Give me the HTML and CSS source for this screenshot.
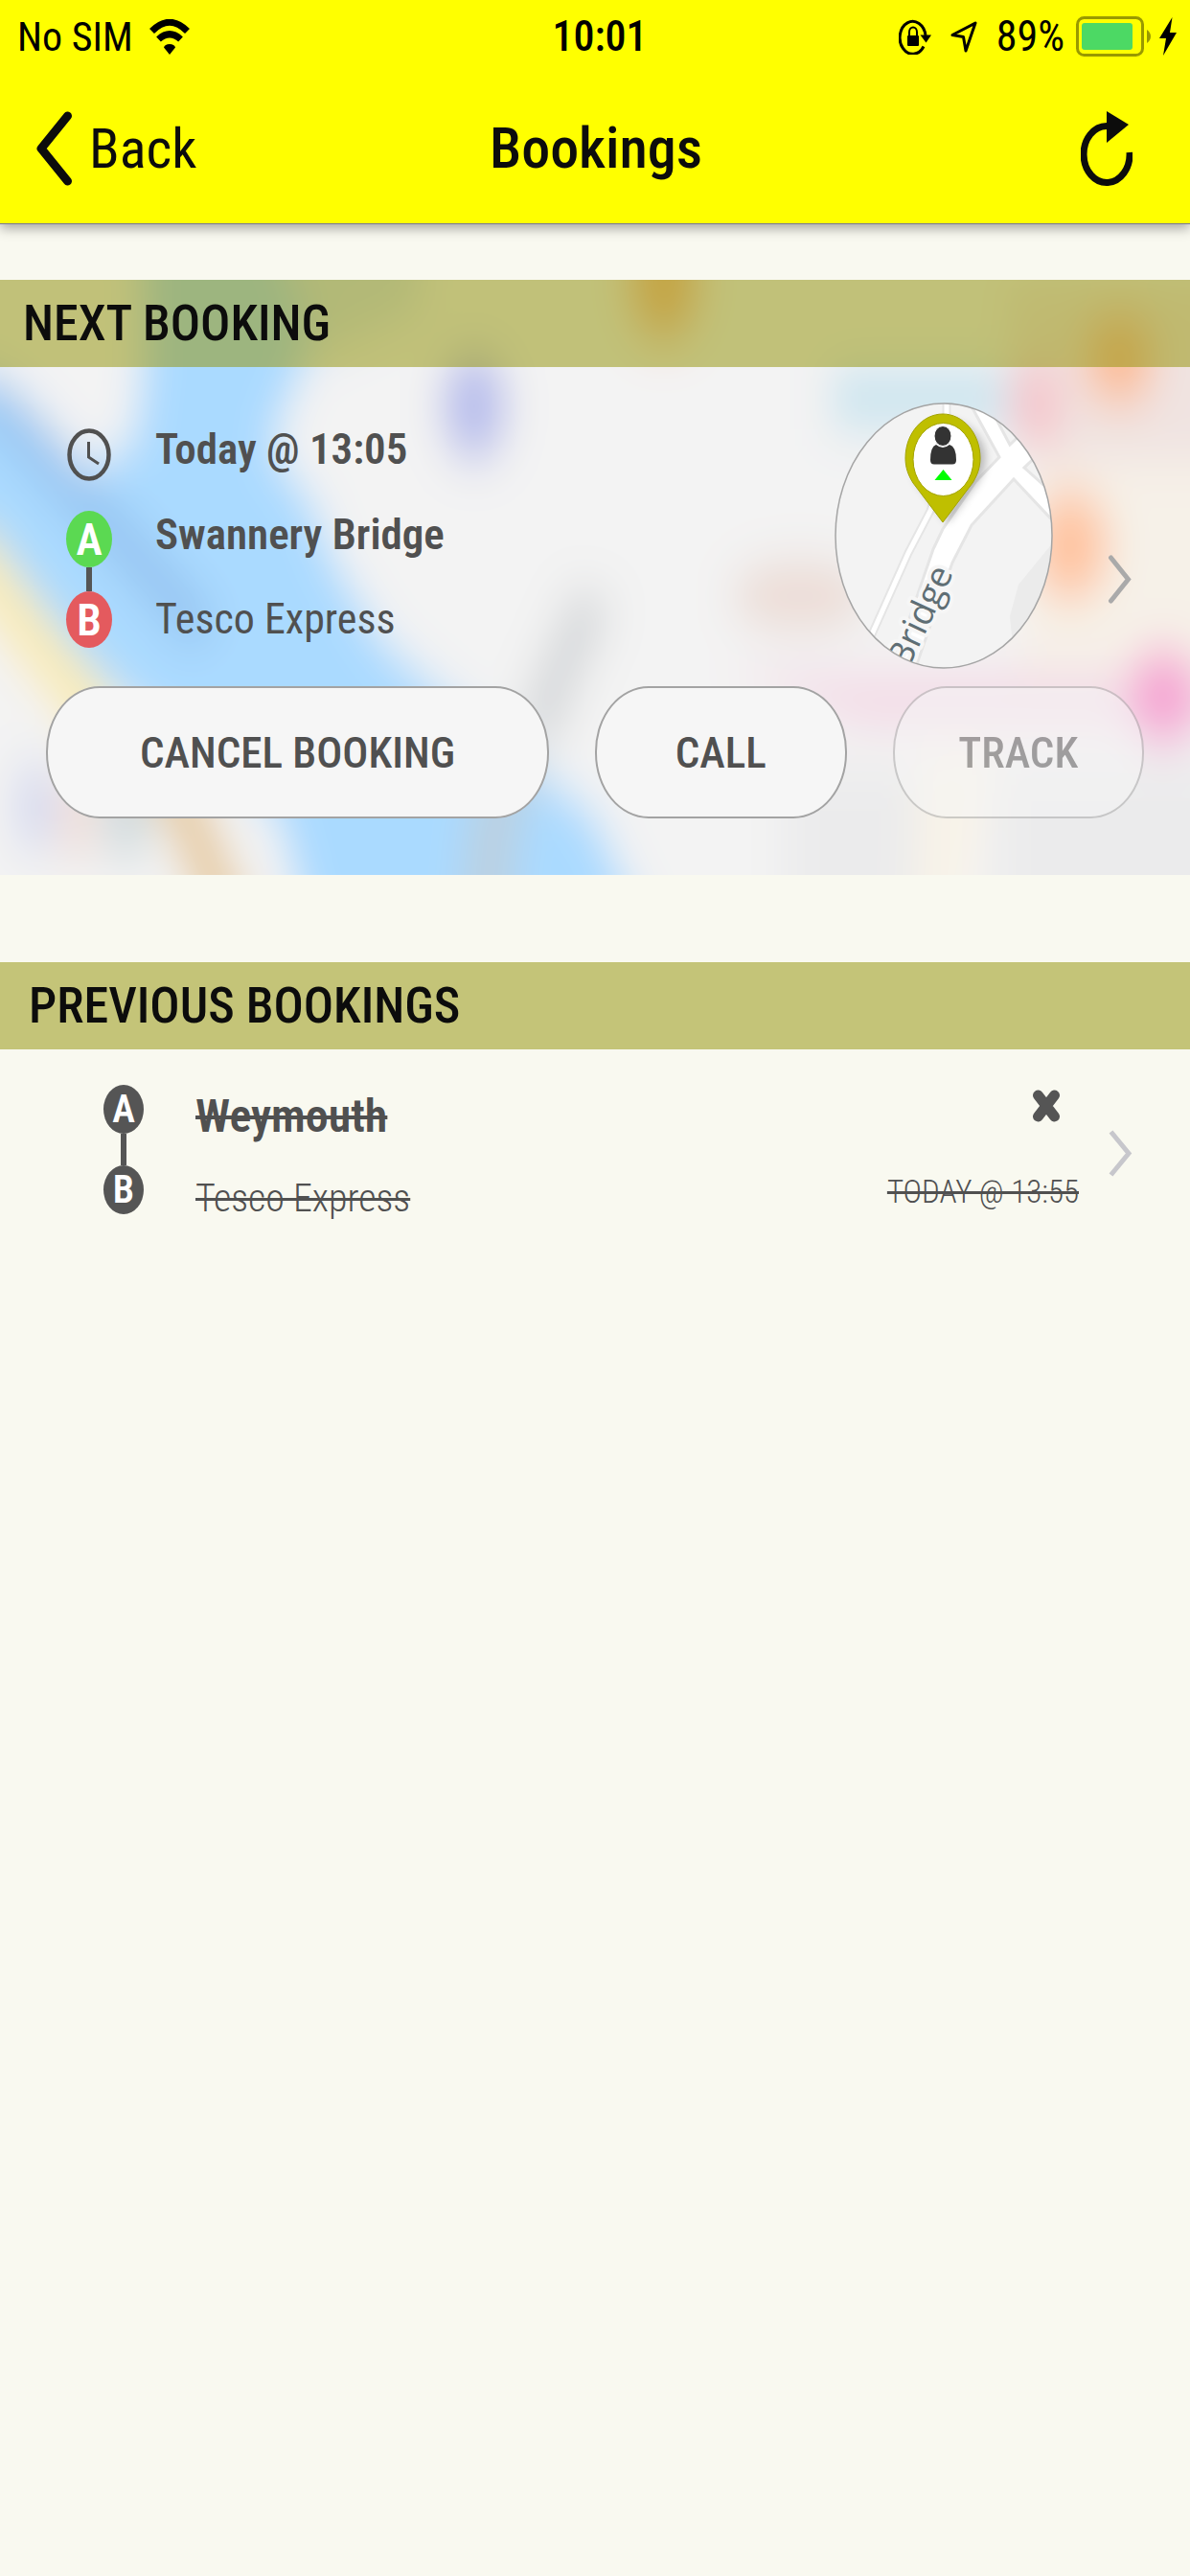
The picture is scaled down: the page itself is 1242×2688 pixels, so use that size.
FILE: index.html
```html
<!DOCTYPE html>
<html lang="en">
<head>
    <meta charset="UTF-8">
    <meta name="viewport" content="width=device-width, initial-scale=1.0">
    <title>Bookings</title>
    <link rel="stylesheet" href="styles.css">
</head>
<body>
    <header class="header">
        <div class="status-bar">
            <div class="status-left">
                <span>No SIM</span>
                <svg class="wifi" viewBox="0 0 42 37" aria-hidden="true">
                    <path d="M2.500 12.500Q21-6 39.500 12.500" fill="none" stroke="#000" stroke-width="7"/>
                    <path d="M9.500 21Q21 10.500 32.500 21" fill="none" stroke="#000" stroke-width="7"/>
                    <path d="M15 29.500Q16 26 21 26T27 29.500L21 37Z"/>
                </svg>
            </div>
            <time class="clock-time">10:01</time>
            <div class="status-right">
                <svg class="lock" viewBox="0 0 34 37" aria-hidden="true">
                    <path d="M26 28.500A13.500 17 0 1 1 28 17" fill="none" stroke="#000" stroke-width="3"/>
                    <path d="M22.500 16.500H34L28.500 24.500Z"/>
                    <rect x="9" y="17" width="12" height="11" rx="1"/>
                    <path d="M11 18V13.500A4 5 0 0 1 19 13.500V18" fill="none" stroke="#000" stroke-width="2"/>
                </svg>
                <svg class="location" viewBox="0 0 28 33" aria-hidden="true">
                    <path d="M2 14.500L26 2L16 31L13.500 16.500Z" fill="none" stroke="#000" stroke-width="3" stroke-linejoin="round"/>
                </svg>
                <span class="percent">89%</span>
                <svg class="battery" viewBox="0 0 79 42" aria-hidden="true">
                    <rect x="1.500" y="1.500" width="68" height="39" rx="7" fill="none" stroke="#999900" stroke-width="3"/>
                    <rect x="6" y="7" width="53" height="28" rx="3" fill="#4cd964"/>
                    <path d="M74 14Q78 17 78 21T74 28Z" fill="#999900"/>
                </svg>
                <svg class="bolt" viewBox="0 0 18 40" aria-hidden="true">
                    <path d="M13.500 0L0 22H7L4 40L18 16H11Z"/>
                </svg>
            </div>
        </div>
        <nav class="nav-bar">
            <a class="back" href="#">
                <svg viewBox="0 0 37 78" aria-hidden="true">
                    <path d="M32.500 5L5 39L32.500 73" fill="none" stroke="#0c0c0c" stroke-width="9" stroke-linecap="round" stroke-linejoin="round"/>
                </svg>
                <span>Back</span>
            </a>
            <h1>Bookings</h1>
            <button class="refresh" type="button" aria-label="Refresh">
                <svg viewBox="0 0 54 80" aria-hidden="true">
                    <path d="M27 16.500A24 29.500 0 1 0 51 44" fill="none" stroke="#0c0c0c" stroke-width="7"/>
                    <path d="M27 1V34L50 15Z" fill="#0c0c0c"/>
                </svg>
            </button>
        </nav>
    </header>

    <main>
        <section class="next">
            <!-- blurred map behind the card -->
            <svg class="map" viewBox="0 0 1242 621" preserveAspectRatio="none" aria-hidden="true">
                <defs>
                    <filter id="soft" x="-20%" y="-20%" width="140%" height="140%" filterUnits="objectBoundingBox">
                        <feGaussianBlur stdDeviation="20 25"/>
                    </filter>
                </defs>
                <rect width="1242" height="621" fill="#f3f3f3"/>
                <g filter="url(#soft)">
                    <rect x="-100" y="-100" width="1442" height="821" fill="#f3f3f3"/>
                    <path d="M-80 90L20 120L90 200L140 170L150 90L145 -60H290L335 50L300 127L282 175L327 236L350 297L400 378L448 422L560 510L620 560L680 690H325L291 560L228 500L143 450L70 380L-80 270Z" fill="#aadaff"/>
                    <path d="M285 -60H440V30L330 80Z" fill="#d5e2ee"/>
                    <path d="M-30 110L20 155L80 221L127 271L214 371" fill="none" stroke="#96c4f1" stroke-width="44"/>
                    <path d="M-40 270L0 325L45 385L90 440L120 500" fill="none" stroke="#faebb4" stroke-width="52"/>
                    <path d="M165 500L200 570L245 680" fill="none" stroke="#e6cba0" stroke-width="46"/>
                    <path d="M620 330L575 430L560 480" fill="none" stroke="#d6d8da" stroke-width="44"/>
                    <path d="M540 500L515 570L505 680" fill="none" stroke="#bcd0df" stroke-width="50"/>
                    <ellipse cx="495" cy="132" rx="34" ry="58" fill="#b8beec"/>
                    <ellipse cx="693" cy="0" rx="38" ry="64" fill="#f9bb8a"/>
                    <path d="M1050 0H1290V190H1060Z" fill="#f0e3e1"/>
                    <path d="M1080 190H1290V420H1060Z" fill="#f6f1e8"/>
                    <path d="M868 92H1050V156H868Z" fill="#cce5f0"/>
                    <ellipse cx="1081" cy="130" rx="28" ry="46" fill="#f5c4cb"/>
                    <ellipse cx="1168" cy="82" rx="36" ry="48" fill="#fcbc94"/>
                    <ellipse cx="1117" cy="277" rx="40" ry="58" fill="#ffc4a0"/>
                    <ellipse cx="835" cy="330" rx="72" ry="36" fill="#ecdcd6"/>
                    <path d="M760 410H1290V470H900Z" fill="#f3dce7"/>
                    <ellipse cx="1214" cy="435" rx="36" ry="50" fill="#f5a4d3"/>
                    <path d="M820 510H960V690H820ZM1040 500H1290V690H1040Z" fill="#ebebec"/>
                    <path d="M960 490H1040L1000 690H950Z" fill="#f8f3e8"/>
                    <ellipse cx="36" cy="550" rx="22" ry="50" fill="#d6daf0"/>
                    <ellipse cx="80" cy="560" rx="18" ry="50" fill="#efdad4"/>
                    <ellipse cx="132" cy="550" rx="26" ry="60" fill="#d0dadd"/>
                </g>
            </svg>

            <h2 class="section-title">NEXT BOOKING</h2>
            <div class="booking">
                <div class="route-col">
                    <svg class="clock" viewBox="0 0 46 55" role="img" aria-label="Pick up time">
                        <ellipse cx="23" cy="27.500" rx="20.500" ry="25" fill="none" stroke="#505050" stroke-width="4.500"/>
                        <path d="M22.500 14V30L33 37" fill="none" stroke="#505050" stroke-width="3"/>
                    </svg>
                    <div class="route">
                        <span class="marker marker-a">A</span>
                        <span class="link"></span>
                        <span class="marker marker-b">B</span>
                    </div>
                </div>
                <div class="details">
                    <p class="strong">Today @ 13:05</p>
                    <p class="strong">Swannery Bridge</p>
                    <p>Tesco Express</p>
                </div>
                <svg class="thumb" viewBox="0 0 228 278" role="img" aria-label="Pick up location">
                    <defs>
                        <clipPath id="oval"><ellipse cx="114" cy="139" rx="113" ry="138"/></clipPath>
                        <filter id="shade" x="-30%" y="-20%" width="180%" height="150%">
                            <feGaussianBlur stdDeviation="5"/>
                        </filter>
                    </defs>
                    <g clip-path="url(#oval)">
                        <rect width="228" height="278" fill="#f3f3f3"/>
                        <path d="M233 140L192 190L183 223L187 262H233Z" fill="#ebebeb"/>
                        <path d="M117 -5V60L100 113L77 157L30 262" fill="none" stroke="#e5e5e5" stroke-width="9"/>
                        <path d="M117 -5V60L100 113L77 157L30 262" fill="none" stroke="#fff" stroke-width="5"/>
                        <path d="M138 -5L172 57L147 83L113 132L103 153L80 220L57 284H82L123 167L143 128L187 80L236 132V102L198 68L222 45L207 21L183 44L157 -5Z" fill="#fff" stroke="#e5e5e5" stroke-width="3"/>
                        <text class="map-label" transform="translate(77 279) rotate(-65)">Bridge</text>
                        <path d="M118 125L87 84C79 72 79 34 99 24C130 8 160 36 157 60C157 68 154 76 149 84Z" fill="#000" opacity=".25" filter="url(#shade)"/>
                        <path d="M113 125L82 84C77 76 74 68 74 58C74 32 92 12 113 12S152 32 152 58C152 68 149 76 144 84Z" fill="#bfbf00" stroke="#a3a300"/>
                        <ellipse cx="113.500" cy="59.500" rx="31.500" ry="38" fill="#fff" stroke="#a3a300"/>
                        <path d="M106 44Q113 50 120 44Q127 46 127 60Q127 64.500 123 64.500H104Q100 64.500 100 60Q100 46 106 44Z" fill="#333"/>
                        <ellipse cx="113" cy="35" rx="9" ry="10.500" fill="#333" stroke="#fff"/>
                        <path d="M113.500 70L122.500 81H104.500Z" fill="#0f0"/>
                    </g>
                    <ellipse cx="114" cy="139" rx="113" ry="138" fill="none" stroke="#a5a5a5" stroke-width="1.500"/>
                </svg>
                <a class="open" href="#" aria-label="Open booking">
                    <svg class="chevron" viewBox="0 0 25 51" aria-hidden="true">
                        <path d="M3.500 3L21.500 25.500L3.500 48" fill="none" stroke="#aaa" stroke-width="5" stroke-linecap="round"/>
                    </svg>
                </a>
            </div>
            <div class="actions">
                <button class="btn" type="button">CANCEL BOOKING</button>
                <button class="btn" type="button">CALL</button>
                <button class="btn" type="button" disabled>TRACK</button>
            </div>
        </section>

        <section class="previous">
            <h2 class="section-title">PREVIOUS BOOKINGS</h2>
            <div class="past-booking">
                <div class="route route-small">
                    <span class="marker">A</span>
                    <span class="link"></span>
                    <span class="marker">B</span>
                </div>
                <div class="past-places">
                    <p><s class="from">Weymouth</s></p>
                    <p><s class="to">Tesco Express</s></p>
                </div>
                <div class="past-state">
                    <svg class="cross" viewBox="0 0 28 34" role="img" aria-label="Cancelled">
                        <path d="M5.500 6L22.500 28M22.500 6L5.500 28" stroke="#555" stroke-width="11" stroke-linecap="round"/>
                    </svg>
                    <s class="past-time">TODAY @ 13:55</s>
                </div>
                <a class="past-open" href="#" aria-label="Open booking">
                    <svg class="chevron" viewBox="0 0 25 51" aria-hidden="true">
                        <path d="M2.500 3L21 25.500L2.500 48" fill="none" stroke="#c7c7cc" stroke-width="5"/>
                    </svg>
                </a>
            </div>
        </section>
    </main>
</body>
</html>
```
FILE: styles.css
```css
* {
    margin: 0;
    padding: 0;
    box-sizing: border-box;
}

body {
    font-family: 'Roboto Condensed', Roboto, 'Liberation Sans', sans-serif;
    font-size: 44px;
    background: #f9f9f0;
    color: #505050;
    min-height: 100vh;
}

svg {
    display: block;
    flex: none;
}

a {
    color: inherit;
    text-decoration: none;
}

/* header */
.header {
    position: relative;
    background: #ffff00;
    color: #0c0c0c;
    border-bottom: 1px solid #77779a;
    box-shadow: 0 4px 12px rgba(0, 0, 0, 0.35);
}

.status-bar {
    display: grid;
    grid-template-columns: 1fr auto 1fr;
    align-items: center;
    height: 76px;
    padding: 0 14px 0 18px;
    color: #000;
    font-size: 42px;
}

.status-left,
.status-right {
    display: flex;
    align-items: center;
}

.status-left {
    gap: 17px;
}

.status-right {
    justify-content: flex-end;
}

.wifi {
    width: 42px;
    height: 37px;
}

.clock-time {
    font-size: 44px;
    font-weight: 500;
    padding-left: 6px;
}

.lock {
    width: 34px;
    height: 37px;
    margin-right: 20px;
}

.location {
    width: 28px;
    height: 33px;
    margin-right: 20px;
}

.percent {
    font-size: 44px;
    margin-right: 12px;
}

.battery {
    width: 79px;
    height: 42px;
    margin-right: 8px;
}

.bolt {
    width: 18px;
    height: 40px;
}

.nav-bar {
    display: grid;
    grid-template-columns: 1fr auto 1fr;
    align-items: center;
    height: 157px;
    padding: 0 60px 0 38px;
}

.nav-bar h1 {
    font-size: 60px;
    font-weight: 500;
    padding-left: 24px;
}

.back {
    display: flex;
    align-items: center;
    gap: 18px;
    font-size: 58px;
}

.back svg {
    width: 37px;
    height: 78px;
}

.refresh {
    justify-self: end;
    background: none;
    border: none;
    cursor: pointer;
}

.refresh svg {
    width: 54px;
    height: 80px;
}

/* next booking */
.next {
    position: relative;
    margin-top: 58px;
    padding-bottom: 59px;
    overflow: hidden;
}

.map {
    position: absolute;
    inset: 0;
    width: 100%;
    height: 100%;
    z-index: -1;
}

.section-title {
    padding: 0 24px;
    background: rgba(143, 143, 0, 0.5);
    color: #0c0c0c;
    font-size: 52px;
    font-weight: 500;
    line-height: 91px;
}

.booking {
    display: flex;
    padding: 37px 61px 18px 69px;
}

.route-col {
    padding-top: 27px;
    margin-right: 45px;
}

.clock {
    width: 46px;
    height: 55px;
    margin: 0 auto 31px;
}

.route {
    display: flex;
    flex-direction: column;
    align-items: center;
}

.marker {
    width: 48px;
    height: 59px;
    border-radius: 50%;
    background: #555;
    color: #fff;
    font-size: 46px;
    font-weight: 600;
    line-height: 60px;
    text-align: center;
}

.marker-a {
    background: #5bd952;
}

.marker-b {
    background: #e45a5e;
}

.link {
    width: 6px;
    height: 25px;
    background: #555;
}

.details {
    flex: 1;
    padding-top: 4px;
    line-height: 89px;
}

.strong {
    font-size: 45px;
    font-weight: 600;
}

.thumb {
    width: 228px;
    height: 278px;
}

.map-label {
    font-family: 'Open Sans', 'Noto Sans', sans-serif;
    font-size: 37px;
    font-weight: 500;
    fill: #5f6e74;
    stroke: #f6f6f6;
    stroke-width: 8px;
    stroke-linejoin: round;
    paint-order: stroke;
}

.open {
    align-self: center;
    margin-left: 57px;
    padding-top: 91px;
}

.chevron {
    width: 25px;
    height: 51px;
}

.actions {
    display: grid;
    grid-template-columns: 2fr 1fr 1fr;
    gap: 48px;
    padding: 0 48px;
}

.btn {
    height: 138px;
    background: #f6f6f6;
    border: 2px solid #a3a3a3;
    border-radius: 56px / 68px;
    color: #505050;
    font-family: inherit;
    font-size: 45px;
    font-weight: 500;
    cursor: pointer;
}

.btn:disabled {
    opacity: 0.5;
    cursor: default;
}

/* previous bookings */
.previous {
    margin-top: 91px;
}

.previous .section-title {
    padding: 0 30px;
}

.past-booking {
    display: flex;
    padding: 28px 60px 27px 108px;
}

.route-small {
    padding-top: 9px;
    margin-right: 54px;
}

.route-small .marker {
    width: 42px;
    height: 51px;
    font-size: 40px;
    line-height: 52px;
}

.route-small .link {
    height: 33px;
}

.past-places {
    flex: 1;
    line-height: 83px;
}

.from {
    font-size: 48px;
    font-weight: 600;
    text-decoration-thickness: 4px;
}

.to {
    font-size: 40px;
    font-weight: 300;
    text-decoration-thickness: 3px;
}

.past-state {
    display: flex;
    flex-direction: column;
    align-items: flex-end;
    padding-top: 14px;
    margin-right: 31px;
}

.cross {
    width: 28px;
    height: 34px;
    margin: 0 20px 53px 0;
}

.past-time {
    font-size: 33px;
    font-weight: 300;
    line-height: 40px;
    text-decoration-thickness: 3px;
}

.past-open {
    align-self: center;
    padding-bottom: 8px;
}
```
